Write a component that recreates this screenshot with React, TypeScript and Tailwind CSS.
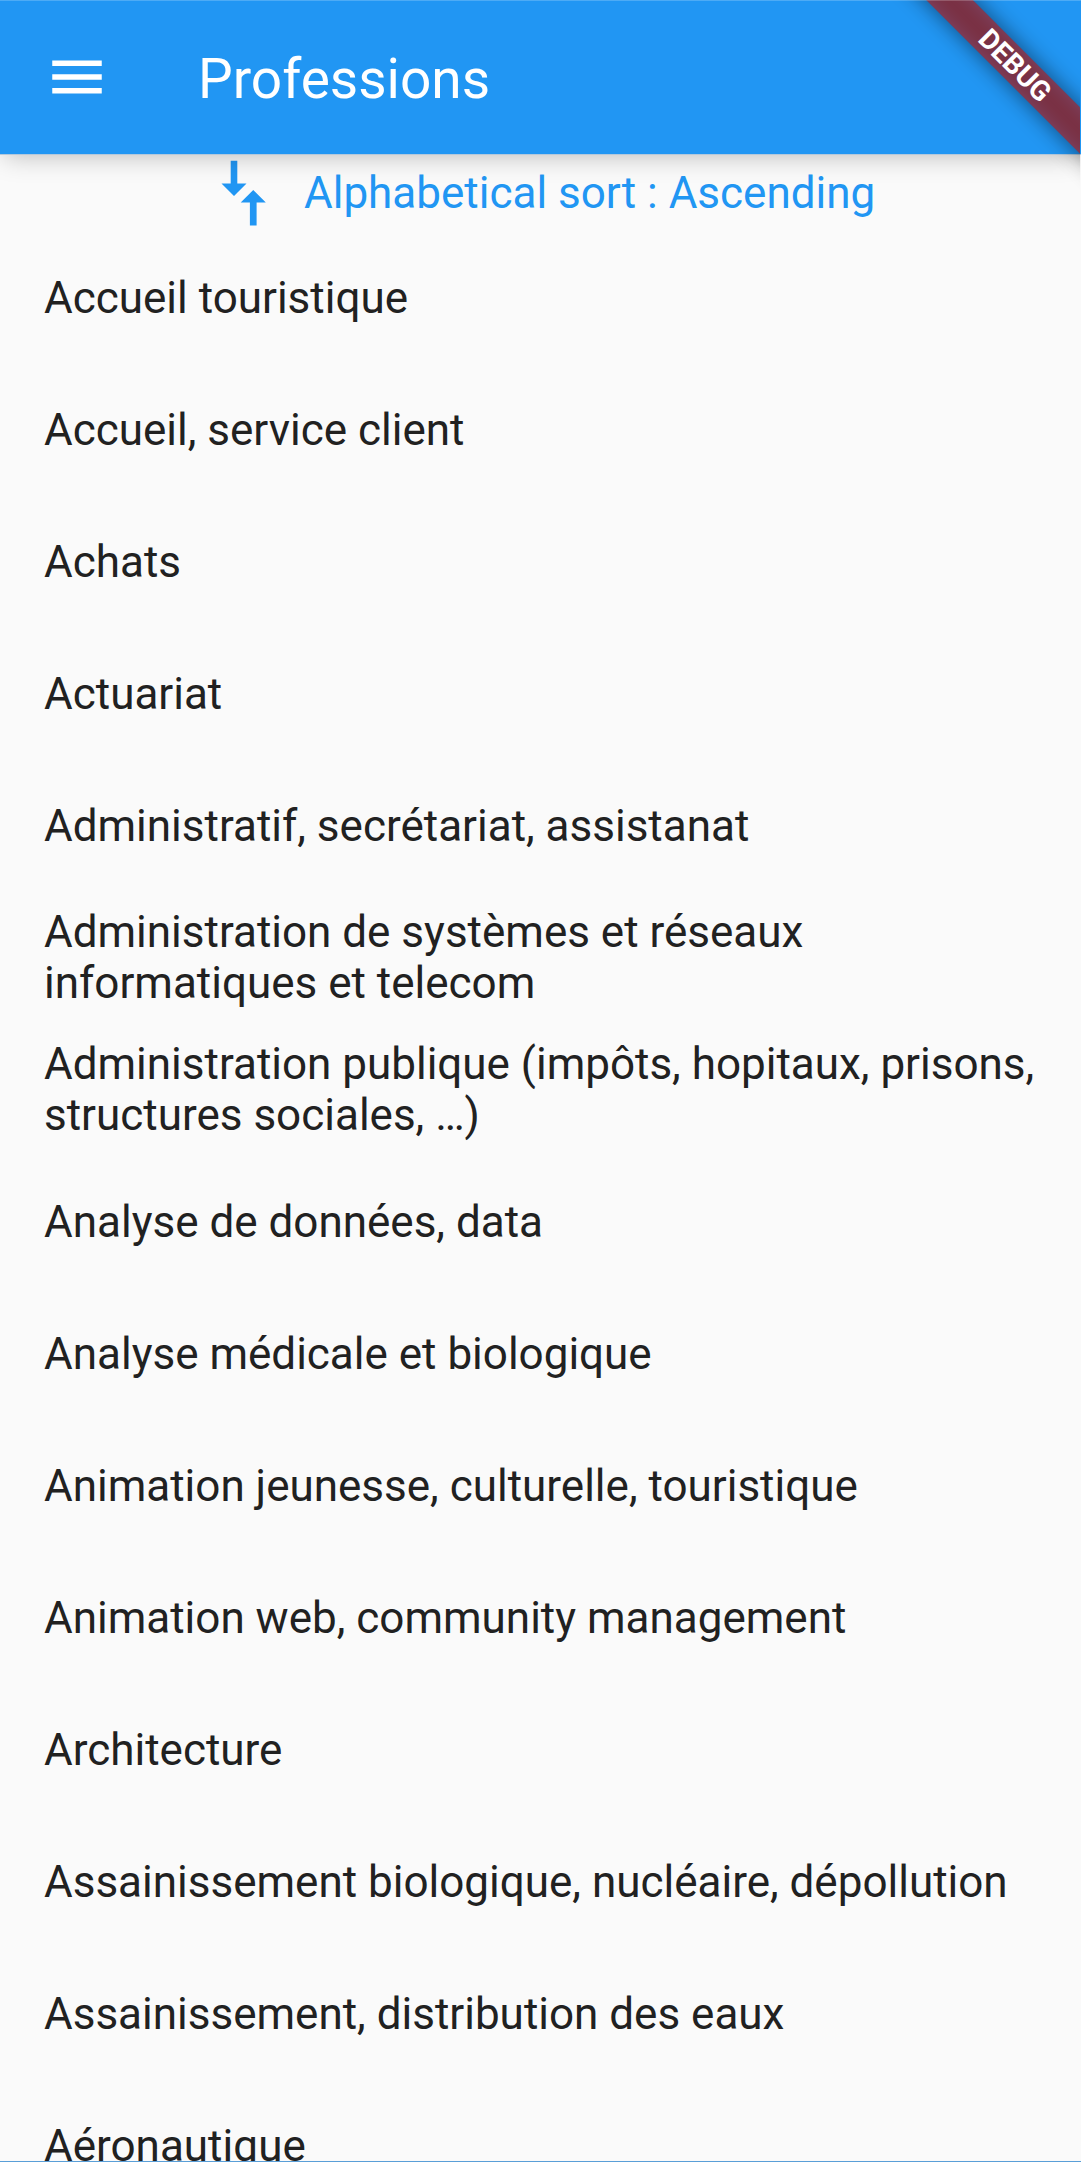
const professions = [
  "Accueil touristique",
  "Accueil, service client",
  "Achats",
  "Actuariat",
  "Administratif, secrétariat, assistanat",
  "Administration de systèmes et réseaux informatiques et telecom",
  "Administration publique (impôts, hopitaux, prisons, structures sociales, …)",
  "Analyse de données, data",
  "Analyse médicale et biologique",
  "Animation jeunesse, culturelle, touristique",
  "Animation web, community management",
  "Architecture",
  "Assainissement biologique, nucléaire, dépollution",
  "Assainissement, distribution des eaux",
  "Aéronautique",
];

function MenuIcon() {
  return (
    <svg className="size-[66px]" viewBox="0 0 24 24" fill="currentColor">
      <path d="M3 18h18v-2H3v2zm0-5h18v-2H3v2zm0-7v2h18V6H3z" />
    </svg>
  );
}

function SortIcon() {
  return (
    <svg className="h-[66px] w-[46px]" viewBox="0 0 46 66" fill="currentColor">
      <path d="M10.700 .700h6.600v22.800h9.200L14 36 1.500 23.500h9.200zM29.900 65.500h6.700V42.500h9.200L33.250 30 20.700 42.500h9.200z" />
    </svg>
  );
}

function DebugBanner() {
  return (
    <div className="pointer-events-none absolute right-px top-0 h-[220px] w-[240px] overflow-hidden">
      <div className="absolute right-[-99.650px] top-[49px] h-[33px] w-[330px] rotate-45">
        <div className="absolute inset-0 bg-black/50 blur-[11px]" />
        <div className="relative flex h-full items-center justify-center bg-[#b71c1ca0] text-[28px] font-bold leading-none text-white">
          DEBUG
        </div>
      </div>
    </div>
  );
}

export default function App() {
  return (
    <div className="relative flex h-[2162px] w-[1081px] flex-col overflow-hidden bg-[#fafafa] font-['Roboto',sans-serif] text-[44px] text-[#212121]">
      <header className="relative z-10 flex h-[154px] shrink-0 items-center bg-[#2196f3] pl-11 text-white shadow-[0_1px_0_#b4c9dc,0_6px_24px_-4px_rgba(0,0,0,0.25)]">
        <MenuIcon />
        <h1 className="ml-[88px] mt-1 text-[55px] leading-[64px]">Professions</h1>
      </header>
      <button className="flex h-[77px] shrink-0 items-center pl-[220px] text-left text-[#2196f3]">
        <SortIcon />
        <span className="ml-[38px]">Alphabetical sort : Ascending</span>
      </button>
      <ul className="shrink-0 pt-px">
        {professions.map((name) => (
          <li key={name} className="flex h-[132px] items-center px-11 leading-[51px]">
            {name}
          </li>
        ))}
      </ul>
      <div className="pointer-events-none absolute inset-0 z-20">
        <DebugBanner />
        <div className="absolute inset-0 border-b border-t border-b-[#5a9fd8] border-t-white/20" />
      </div>
    </div>
  );
}
